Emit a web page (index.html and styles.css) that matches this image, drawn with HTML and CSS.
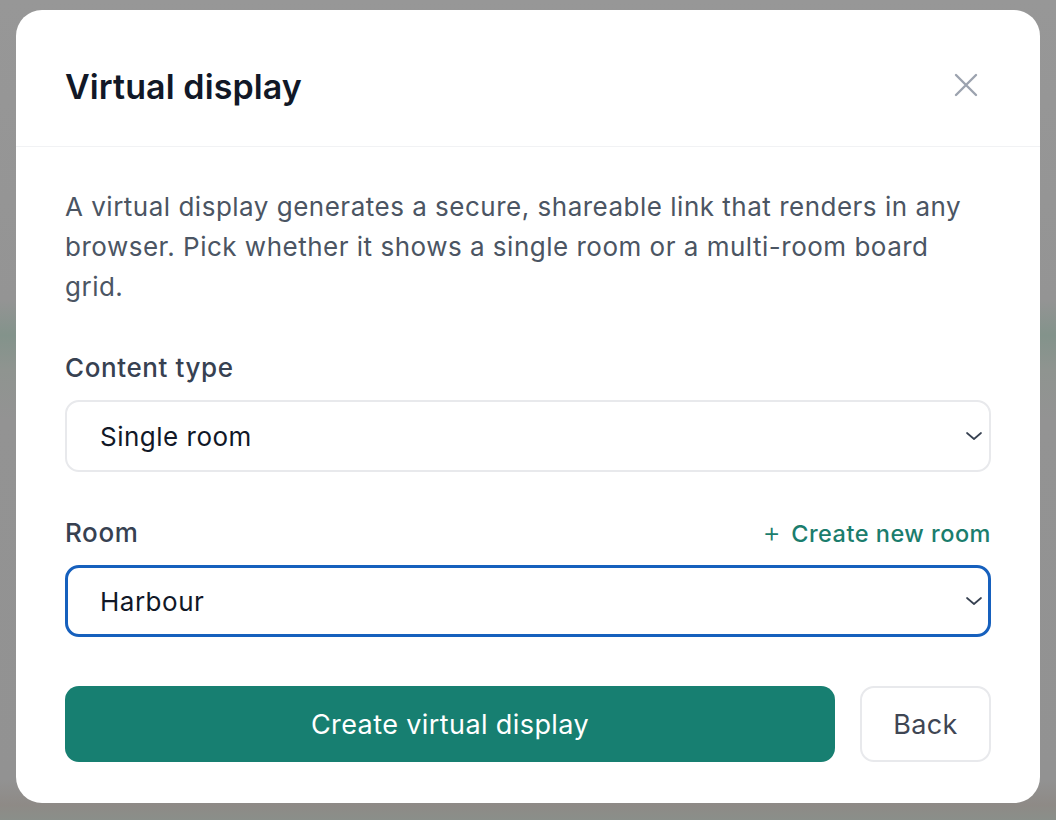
FILE: index.html
```html
<!DOCTYPE html>
<html lang="en">
<head>
  <meta charset="UTF-8">
  <title>Virtual display</title>
  <link rel="stylesheet" href="styles.css">
</head>
<body>
  <div class="backdrop">
    <div class="modal">
      <div class="modal-header">
        <h2>Virtual display</h2>
        <button class="close-btn" aria-label="Close">
          <svg width="26" height="26" viewBox="0 0 26 26" fill="none" stroke="#9ca3af" stroke-width="2.4" stroke-linecap="round">
            <path d="M3 3 L23 23 M23 3 L3 23"/>
          </svg>
        </button>
      </div>

      <div class="modal-body">
        <p class="intro">A virtual display generates a secure, shareable link that renders in any browser. Pick whether it shows a single room or a multi-room board grid.</p>

        <div class="field">
          <div class="field-label">
            <span>Content type</span>
          </div>
          <div class="select">
            <span>Single room</span>
            <svg width="18" height="10" viewBox="0 0 18 10" fill="none" stroke="#374151" stroke-width="1.7" stroke-linecap="round" stroke-linejoin="round">
              <path d="M2 2 L9 8 L16 2"/>
            </svg>
          </div>
        </div>

        <div class="field">
          <div class="field-label">
            <span>Room</span>
            <a class="create-link" href="#"><span class="plus">+</span>Create new room</a>
          </div>
          <div class="select focused">
            <span>Harbour</span>
            <svg width="18" height="10" viewBox="0 0 18 10" fill="none" stroke="#374151" stroke-width="1.7" stroke-linecap="round" stroke-linejoin="round">
              <path d="M2 2 L9 8 L16 2"/>
            </svg>
          </div>
        </div>

        <div class="actions">
          <button class="btn-primary">Create virtual display</button>
          <button class="btn-secondary">Back</button>
        </div>
      </div>
    </div>
  </div>
</body>
</html>
```

FILE: styles.css
```css
html, body {
  margin: 0;
  height: 100%;
}

body {
  font-family: Inter, "Noto Sans", sans-serif;
  background: #959595;
}

/* blurred page behind the dialog */
.backdrop {
  height: 100%;
  box-sizing: border-box;
  padding: 10px 16px 0 16px;
  background:
    linear-gradient(to bottom,
      #979797 0px, #949494 300px,
      #83938b 335px, #8f9490 370px,
      #939393 420px, #929292 780px,
      #8e8a86 805px, #8a8f8a 820px);
}

.modal {
  background: #fff;
  border-radius: 26px;
  overflow: hidden;
}

.modal-header {
  height: 137px;
  box-sizing: border-box;
  display: flex;
  align-items: center;
  justify-content: space-between;
  padding: 16px 61px 0 49px;
  border-bottom: 1px solid #f1f2f4;
}

.modal-header h2 {
  margin: 0;
  font-size: 34px;
  font-weight: 600;
  color: #111827;
  letter-spacing: 0.1px;
}

.close-btn {
  background: none;
  border: 0;
  padding: 0;
  display: flex;
  margin-top: -2px;
}

.modal-body {
  padding: 40px 49px 41px 49px;
}

.intro {
  margin: 0 0 40px 0;
  font-size: 26px;
  line-height: 40px;
  color: #4b5563;
  letter-spacing: 0.5px;
}

.field {
  margin-bottom: 40px;
}

.field-label {
  display: flex;
  justify-content: space-between;
  align-items: center;
  height: 40px;
  margin-bottom: 13px;
  font-size: 26px;
  font-weight: 450;
  color: #374151;
  letter-spacing: 0.6px;
}

.create-link {
  color: #1b7d6d;
  text-decoration: none;
  font-size: 23.5px;
  font-weight: 450;
  letter-spacing: 0.5px;
}

.create-link .plus {
  font-weight: 300;
  font-size: 28px;
  margin-right: 10px;
}

.select {
  height: 72px;
  box-sizing: border-box;
  border: 2px solid #e8e9ec;
  border-radius: 14px;
  display: flex;
  align-items: center;
  justify-content: space-between;
  padding: 0 6px 0 33px;
  font-size: 26px;
  color: #111827;
  letter-spacing: 0.5px;
}

.select.focused {
  border: 3px solid #1660bd;
  padding-left: 32px;
  padding-right: 5px;
}

.actions {
  display: flex;
  gap: 25px;
  margin-top: 49px;
}

.actions button {
  height: 76px;
  border-radius: 14px;
  font-family: inherit;
  font-size: 27px;
  font-weight: 420;
  letter-spacing: 0.4px;
  cursor: pointer;
}

.btn-primary {
  flex: 1;
  background: #177f71;
  color: #fff;
  border: 0;
}

.btn-secondary {
  width: 131px;
  background: #fff;
  color: #3f4653;
  border: 2px solid #e8e9ec;
}
```
